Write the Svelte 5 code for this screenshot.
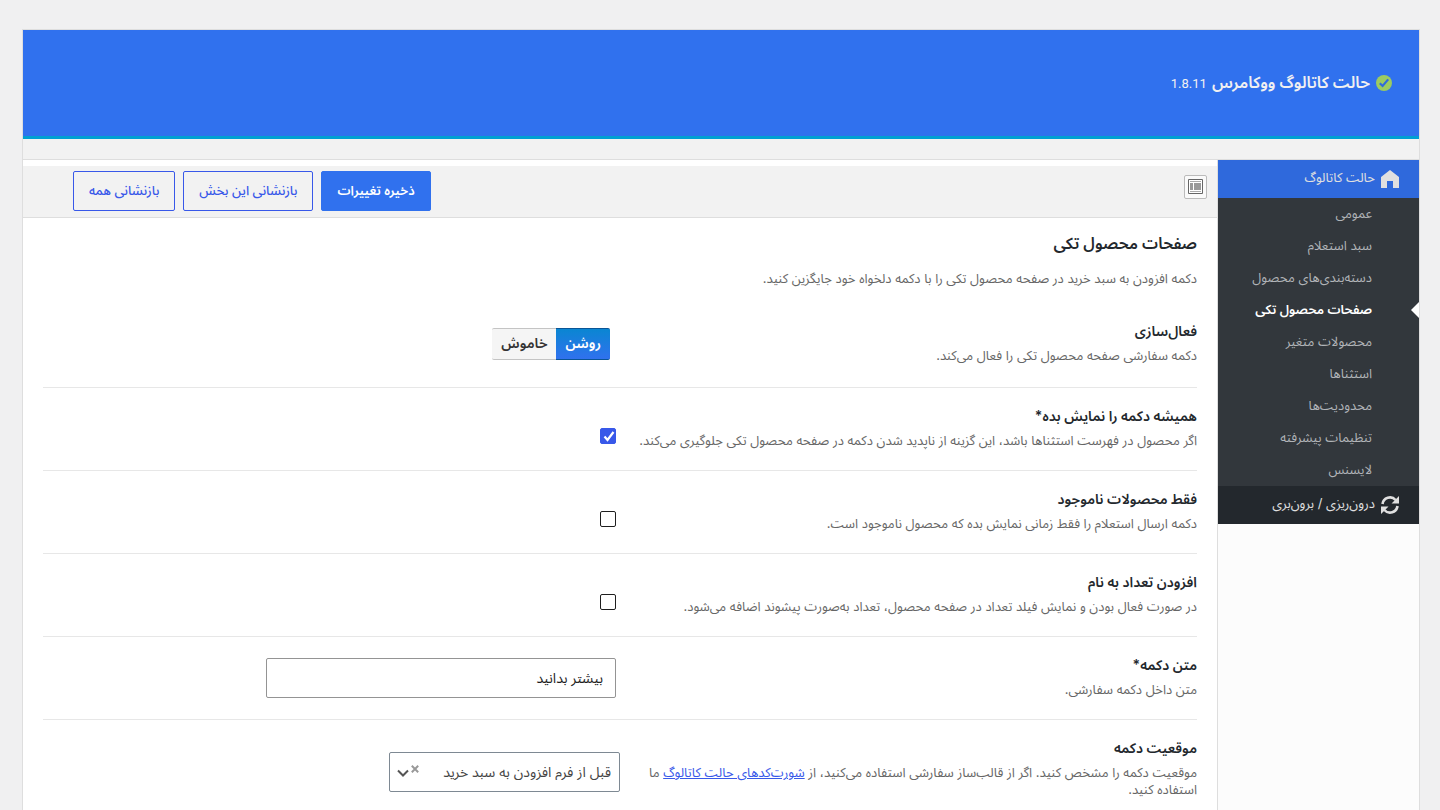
<script>
  const menu = [
    'عمومی',
    'سبد استعلام',
    'دسته‌بندی‌های محصول',
    'صفحات محصول تکی',
    'محصولات متغیر',
    'استثناها',
    'محدودیت‌ها',
    'تنظیمات پیشرفته',
    'لایسنس'
  ];

  const fields = [
    { id: 'enabled', type: 'switch', title: 'فعال‌سازی', desc: 'دکمه سفارشی صفحه محصول تکی را فعال می‌کند.' },
    { id: 'always', type: 'checkbox', title: 'همیشه دکمه را نمایش بده*', desc: 'اگر محصول در فهرست استثناها باشد، این گزینه از ناپدید شدن دکمه در صفحه محصول تکی جلوگیری می‌کند.' },
    { id: 'outofstock', type: 'checkbox', title: 'فقط محصولات ناموجود', desc: 'دکمه ارسال استعلام را فقط زمانی نمایش بده که محصول ناموجود است.' },
    { id: 'quantity', type: 'checkbox', title: 'افزودن تعداد به نام', desc: 'در صورت فعال بودن و نمایش فیلد تعداد در صفحه محصول، تعداد به‌صورت پیشوند اضافه می‌شود.' },
    { id: 'text', type: 'text', title: 'متن دکمه*', desc: 'متن داخل دکمه سفارشی.' },
    { id: 'position', type: 'select', title: 'موقعیت دکمه' }
  ];

  let active = $state('صفحات محصول تکی');
  let values = $state({
    enabled: 'on',
    always: true,
    outofstock: false,
    quantity: false,
    text: 'بیشتر بدانید',
    position: 'before'
  });
</script>

<div class="page" dir="rtl">
  <div class="panel">
    <header>
      <svg class="tick" viewBox="0 0 18 18" aria-hidden="true">
        <circle cx="9" cy="9" r="8" fill="#9ccb60" />
        <path d="M4.800 9.200l2.800 2.800 5.600-6.600" fill="none" stroke="#2f6bdc" stroke-width="2.200" />
      </svg>
      <h1>حالت کاتالوگ ووکامرس</h1>
      <span class="version">1.8.11</span>
    </header>
    <div class="strip"></div>

    <div class="body">
      <nav>
        <a class="group current" href="#catalog">
          <svg viewBox="0 0 18 18" aria-hidden="true"><path d="M9 0L0 7v11h6v-7h6v7h6V7z" fill="currentColor" /></svg>
          <span>حالت کاتالوگ</span>
        </a>
        <ul>
          {#each menu as item}
            <li class:active={item === active}>
              <a href="#section" onclick={() => (active = item)}>{item}</a>
            </li>
          {/each}
        </ul>
        <a class="group import" href="#import">
          <svg viewBox="0 0 18 18" aria-hidden="true">
            <path d="M1.500 8A7.500 7.500 0 0 1 14.600 4M16.500 10A7.500 7.500 0 0 1 3.400 14" fill="none" stroke="currentColor" stroke-width="2.600" />
            <path d="M18 0v7.500h-7.500zM0 18v-7.500h7.500z" fill="currentColor" />
          </svg>
          <span>درون‌ریزی / برون‌بری</span>
        </a>
      </nav>

      <main>
        <div class="toolbar">
          <button class="expand" type="button" aria-label="نمایش همه">
            <svg viewBox="0 0 15 15" aria-hidden="true">
              <path d="M.5.5h14v14H.5z" fill="#fff" stroke="#666" />
              <path d="M2 2.500h11M2 12.500h11" stroke="#aaa" />
              <path d="M2 4h3v7H2zM6 4h7v7H6z" fill="#999" />
            </svg>
          </button>
          <div class="actions">
            <button class="btn primary" type="button">ذخیره تغییرات</button>
            <button class="btn" type="button">بازنشانی این بخش</button>
            <button class="btn" type="button">بازنشانی همه</button>
          </div>
        </div>

        <div class="content">
          <h2>صفحات محصول تکی</h2>
          <p class="intro">دکمه افزودن به سبد خرید در صفحه محصول تکی را با دکمه دلخواه خود جایگزین کنید.</p>

          {#each fields as field}
            <div class="row">
              <div class="info">
                <label class="title" for={field.id}>{field.title}</label>
                {#if field.desc}
                  <p>{field.desc}</p>
                {:else}
                  <p>موقعیت دکمه را مشخص کنید. اگر از قالب‌ساز سفارشی استفاده می‌کنید، از <a href="#shortcodes">شورت‌کدهای حالت کاتالوگ</a> ما استفاده کنید.</p>
                {/if}
              </div>
              <div class="control {field.type}">
                {#if field.type === 'switch'}
                  <div class="switch-box" role="radiogroup" aria-label={field.title}>
                    <label class:on={values.enabled === 'on'}>
                      <input id={field.id} type="radio" name="enabled" value="on" bind:group={values.enabled} />روشن
                    </label>
                    <label class:on={values.enabled === 'off'}>
                      <input type="radio" name="enabled" value="off" bind:group={values.enabled} />خاموش
                    </label>
                  </div>
                {:else if field.type === 'checkbox'}
                  <span class="check">
                    <input id={field.id} type="checkbox" bind:checked={values[field.id]} />
                    {#if values[field.id]}
                      <svg viewBox="0 0 16 16" aria-hidden="true"><path d="M4.500 8.500l3 3.500 6-8" fill="none" stroke="#fff" stroke-width="2.200" /></svg>
                    {/if}
                  </span>
                {:else if field.type === 'text'}
                  <input id={field.id} type="text" bind:value={values.text} />
                {:else}
                  <div class="select-box">
                    <select id={field.id} bind:value={values.position}>
                      <option value="before">قبل از فرم افزودن به سبد خرید</option>
                      <option value="after">بعد از فرم افزودن به سبد خرید</option>
                    </select>
                    <button class="clear" type="button" aria-label="پاک کردن" onclick={() => (values.position = '')}>
                      <svg viewBox="0 0 8 8" aria-hidden="true"><path d="M.8.8l6.400 6.400M7.200.8L.8 7.200" stroke="#999" stroke-width="2" /></svg>
                    </button>
                    <svg class="chevron" viewBox="0 0 12 8" aria-hidden="true"><path d="M1 1.500l5 5 5-5" fill="none" stroke="#555" stroke-width="2" /></svg>
                  </div>
                {/if}
              </div>
            </div>
          {/each}
        </div>
      </main>
    </div>
  </div>
</div>

<style>
  :global(body) {
    background: #f0f0f1;
    overflow: hidden;
  }

  .page {
    height: 100vh;
    overflow: hidden;
    padding: 29px 20px 0 22px;
    box-sizing: border-box;
    font-family: Inter, "Noto Sans Arabic", "DejaVu Sans", sans-serif;
    font-size: 13px;
    color: #666;
  }

  .page * {
    box-sizing: border-box;
  }

  button, input, select {
    font-family: inherit;
  }

  h1, h2, p, ul {
    margin: 0;
    padding: 0;
  }

  .panel {
    border: 1px solid #dedede;
    min-height: 100vh;
    display: flex;
    flex-direction: column;
  }

  header {
    display: flex;
    align-items: center;
    height: 109px;
    padding: 0 26px;
    background: #3071ee;
    border-bottom: 3px solid #00a0d2;
    color: #f0f0f1;
  }

  .tick {
    width: 18px;
    height: 18px;
    margin-left: 5px;
  }

  h1 {
    font-size: 16px;
    line-height: 24px;
    font-weight: 600;
    margin-left: 5px;
    padding-bottom: 2px;
  }

  .version {
    font-family: Roboto, sans-serif;
    font-size: 13px;
  }

  .strip {
    height: 21px;
    background: #f2f2f2;
    border-bottom: 1px solid #dedede;
  }

  .body {
    display: flex;
    flex: 1;
    background: #fcfcfc;
  }

  nav {
    width: 201px;
    flex: none;
  }

  nav a {
    text-decoration: none;
  }

  .group {
    display: flex;
    align-items: center;
    gap: 6px;
    height: 38px;
    padding: 0 20px;
    background: #23282d;
    color: #e0e0e0;
  }

  .group svg {
    width: 18px;
    height: 18px;
  }

  .group span {
    padding-bottom: 2px;
  }

  .group.current {
    background: #2f69dc;
  }

  nav ul {
    list-style: none;
    background: #32373c;
  }

  nav li {
    position: relative;
  }

  nav li a {
    display: block;
    padding: 0 47px 0 10px;
    line-height: 30px;
    height: 32px;
    color: #b1b4b8;
    white-space: nowrap;
  }

  nav li.active a {
    color: #fff;
    font-weight: 600;
  }

  nav li.active::before {
    content: "";
    position: absolute;
    right: 0;
    top: 8px;
    border: 8px solid transparent;
    border-right-color: #fff;
    border-left-width: 0;
  }

  main {
    flex: 1;
    min-width: 0;
    background: #fff;
    border-right: 1px solid #dedede;
  }

  .toolbar {
    display: flex;
    justify-content: space-between;
    align-items: center;
    margin-top: 6px;
    height: 52px;
    padding: 0 10px 2px 50px;
    background: #f2f2f2;
    border-bottom: 1px solid #dedede;
  }

  .expand {
    width: 23px;
    height: 24px;
    padding: 0;
    margin-bottom: 8px;
    display: grid;
    place-items: center;
    border: 1px solid #bbb;
    border-radius: 2px;
    background: #fafafa;
  }

  .expand svg {
    width: 15px;
    height: 15px;
  }

  .actions {
    display: flex;
    gap: 8px;
  }

  .btn {
    height: 40px;
    padding: 0 15px;
    border: 1px solid #3858e9;
    border-radius: 2px;
    background: transparent;
    color: #3858e9;
    font-size: 13px;
    font-weight: 500;
  }

  .btn.primary {
    background: #3071ee;
    border-color: #3071ee;
    color: #fff;
    font-weight: 600;
  }

  .content {
    padding: 13px 20px;
  }

  h2 {
    font-size: 16px;
    line-height: 24px;
    font-weight: 600;
    color: #23282d;
  }

  .intro {
    margin: 11px 0 15px;
    line-height: 24px;
  }

  .row {
    display: flex;
    min-height: 83px;
    border-bottom: 1px solid #e7e7e7;
  }

  .info {
    width: 50%;
    padding: 16px 0 20px 10px;
  }

  .row:first-of-type .info {
    padding-top: 14px;
  }

  .title {
    display: block;
    font-size: 14px;
    line-height: 24px;
    font-weight: 600;
    color: #23282d;
  }

  .info p {
    line-height: 17px;
    padding-top: 4px;
  }

  .info a {
    color: #3858e9;
  }

  .control {
    width: 50%;
    padding: 20px 4px 0 0;
  }

  .control.switch {
    padding: 23px 10px 0 0;
  }

  .switch-box {
    display: inline-flex;
  }

  .switch-box label {
    height: 32px;
    padding: 0 9px;
    line-height: 28px;
    font-size: 14px;
    font-weight: 600;
    color: #333;
    background: #f5f5f5;
    border: 1px solid #c4c4c4;
    border-width: 1px 0;
    border-radius: 2px 0 0 2px;
  }

  .switch-box label.on {
    color: #fff;
    background: linear-gradient(#0a86d2, #3071ee);
    border-color: #0a5596;
    border-radius: 0 2px 2px 0;
  }

  .switch-box input {
    position: absolute;
    opacity: 0;
  }

  .control.checkbox {
    padding-top: 40px;
  }

  .check {
    display: grid;
    width: 16px;
    height: 16px;
  }

  .check input, .check svg {
    grid-area: 1 / 1;
    width: 16px;
    height: 16px;
    margin: 0;
  }

  .check svg {
    pointer-events: none;
  }

  .check input {
    appearance: none;
    border: 1px solid #1e1e1e;
    border-radius: 2px;
    background: #fff;
  }

  .check input:checked {
    background: #3858e9;
    border-color: #3858e9;
  }

  .control.text {
    padding-top: 21px;
  }

  .text input {
    width: 350px;
    max-width: 100%;
    height: 40px;
    padding: 0 12px;
    border: 1px solid #949494;
    border-radius: 2px;
    background: #fff;
    color: #1e1e1e;
    font-size: 14px;
  }

  .control.select {
    padding: 32px 0 0;
  }

  .select-box {
    position: relative;
    width: 231px;
  }

  select {
    appearance: none;
    width: 100%;
    height: 40px;
    padding: 0 8px 2px 44px;
    border: 1px solid #7e8993;
    border-radius: 2px;
    background: #fff;
    color: #444;
    font-size: 14px;
  }

  .clear {
    position: absolute;
    left: 20px;
    top: 11px;
    width: 12px;
    height: 12px;
    padding: 2px;
    border: 0;
    background: none;
    display: grid;
  }

  .chevron {
    position: absolute;
    left: 8px;
    top: 17px;
    width: 12px;
    height: 8px;
    pointer-events: none;
  }
</style>
